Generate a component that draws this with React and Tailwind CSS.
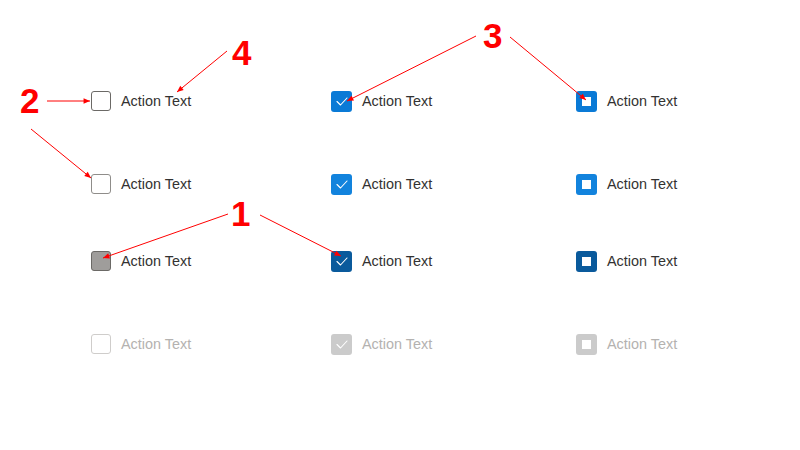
import React from "react"

const font = { fontFamily: '"Liberation Sans", Arial, sans-serif' }

const Check = () => (
  <svg width="20" height="20" viewBox="0 0 20 20" fill="none">
    <path d="M5 10.5l3.5 3.5 6.5-7" stroke="#ffffff" strokeWidth="1.1" strokeLinecap="round" strokeLinejoin="round" />
  </svg>
)

const Box = ({ variant }) => {
  const styles = {
    rest: "border-[1.5px] border-[#6b6966] bg-white",
    hover: "border-[1.5px] border-[#8f8d8a] bg-white",
    pressed: "border-[1.5px] border-[#6b6966] bg-[#9f9d9b]",
    disabled: "border-[1.5px] border-[#cfcdcb] bg-white",
  }
  return <div className={`w-[20px] h-[20px] rounded-[3px] shrink-0 ${styles[variant]}`} />
}

const Item = ({ box, mark, disabled }) => {
  const fills = {
    blue: "bg-[#0a7ad6]",
    blueHover: "bg-[#1283dd]",
    bluePressed: "bg-[#0a5a9c]",
    grey: "bg-[#cbcbcb]",
  }
  return (
    <div className="flex items-center gap-[10px] h-[20px]">
      {mark ? (
        <div className={`w-[21px] h-[21px] rounded-[3px] flex items-center justify-center shrink-0 ${fills[box]}`}>
          {mark === "check" ? <Check /> : <div className="w-[9px] h-[9px] bg-white" />}
        </div>
      ) : (
        <Box variant={box} />
      )}
      <span className={`text-[14.4px] leading-none ${disabled ? "text-[#b4b2b0]" : "text-[#333231]"}`} style={font}>
        Action Text
      </span>
    </div>
  )
}

const rows = [
  { mt: "mt-0", items: [{ box: "rest" }, { box: "blue", mark: "check" }, { box: "blue", mark: "square" }] },
  { mt: "mt-[63px]", items: [{ box: "hover" }, { box: "blueHover", mark: "check" }, { box: "blueHover", mark: "square" }] },
  { mt: "mt-[57px]", items: [{ box: "pressed" }, { box: "bluePressed", mark: "check" }, { box: "bluePressed", mark: "square" }] },
  { mt: "mt-[63px]", items: [{ box: "disabled", disabled: true }, { box: "grey", mark: "check", disabled: true }, { box: "grey", mark: "square", disabled: true }] },
]

const Arrow = ({ x1, y1, x2, y2 }) => {
  const a = Math.atan2(y2 - y1, x2 - x1)
  const l = 7
  const w = 0.4
  const p1 = `${x2 - l * Math.cos(a - w)},${y2 - l * Math.sin(a - w)}`
  const p2 = `${x2 - l * Math.cos(a + w)},${y2 - l * Math.sin(a + w)}`
  return (
    <g>
      <line x1={x1} y1={y1} x2={x2} y2={y2} stroke="#ff0000" strokeWidth="1" />
      <polygon points={`${x2},${y2} ${p1} ${p2}`} fill="#ff0000" />
    </g>
  )
}

const Num = ({ children, className }) => (
  <span className={`absolute text-[35px] font-bold leading-none text-[#ff0000] ${className}`} style={font}>
    {children}
  </span>
)

export default function App() {
  return (
    <div className="relative w-[800px] h-[450px] bg-white overflow-hidden">
      <div className="pt-[91px] pl-[91px]">
        {rows.map((r, i) => (
          <div key={i} className={`flex ${r.mt}`}>
            <div className="w-[240px]"><Item {...r.items[0]} /></div>
            <div className="w-[245px]"><Item {...r.items[1]} /></div>
            <div><Item {...r.items[2]} /></div>
          </div>
        ))}
      </div>

      <svg className="absolute inset-0" width="800" height="450">
        <Arrow x1={47} y1={101} x2={90} y2={101} />
        <Arrow x1={31} y1={129} x2={91} y2={178} />
        <Arrow x1={227} y1={51} x2={177} y2={92} />
        <Arrow x1={476} y1={36} x2={347} y2={101} />
        <Arrow x1={510} y1={37} x2={586} y2={100} />
        <Arrow x1={228} y1={214} x2={103} y2={258} />
        <Arrow x1={260} y1={215} x2={341} y2={256} />
      </svg>

      <Num className="left-[20px] top-[83px]">2</Num>
      <Num className="left-[232px] top-[35px]">4</Num>
      <Num className="left-[483px] top-[18px]">3</Num>
      <Num className="left-[231px] top-[196px]">1</Num>
    </div>
  )
}
